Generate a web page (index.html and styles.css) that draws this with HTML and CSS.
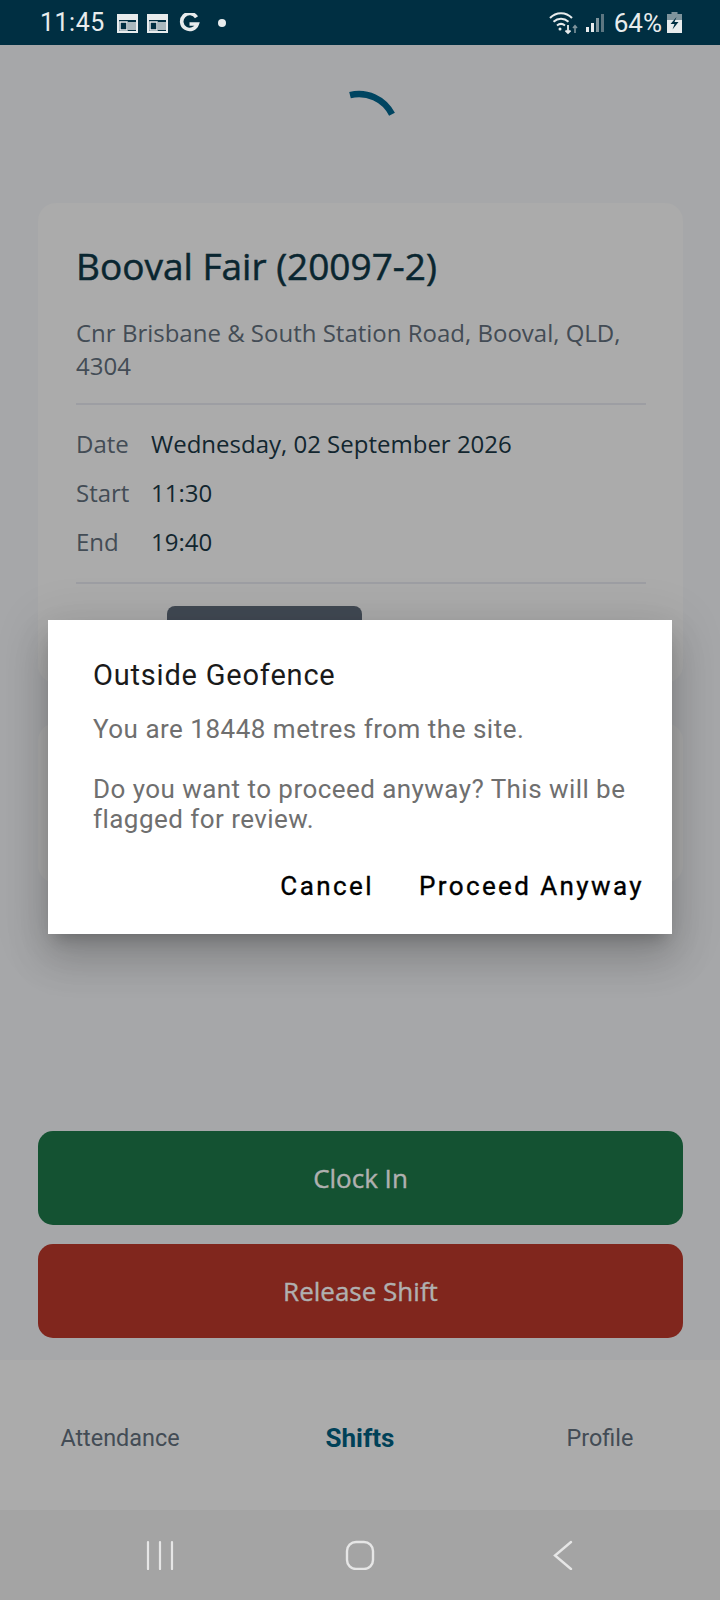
FILE: index.html
```html
<!DOCTYPE html>
<html lang="en">
<head>
  <meta charset="UTF-8">
  <title>Shift Details</title>
  <link rel="stylesheet" href="styles.css">
</head>
<body>
  <div class="phone">
    <div class="status-bar">
      <div class="status-left">
        <span class="clock">11:45</span>
        <svg class="cal-icon" width="21" height="20" viewBox="0 0 21 20"><path d="M1 3h19v16H1z" fill="none" stroke="#e8eced" stroke-width="2"/><path d="M0 1h21v6H0z" fill="#e8eced"/><path d="M3 9h7v8H3z" fill="none" stroke="#e8eced" stroke-width="1.500"/><path d="M11 9h8v8h-8z" fill="#a9b8bd"/></svg>
        <svg class="cal-icon" width="21" height="20" viewBox="0 0 21 20"><path d="M1 3h19v16H1z" fill="none" stroke="#e8eced" stroke-width="2"/><path d="M0 1h21v6H0z" fill="#e8eced"/><path d="M3 9h7v8H3z" fill="none" stroke="#e8eced" stroke-width="1.500"/><path d="M11 9h8v8h-8z" fill="#a9b8bd"/></svg>
        <svg class="g-icon" width="21" height="20" viewBox="0 0 21 20"><path d="M17.500 4.300A8 8 0 1 0 18.300 11H10.500" fill="none" stroke="#e8eced" stroke-width="3.600"/></svg>
        <span class="dot"></span>
      </div>
      <div class="status-right">
        <svg width="30" height="24" viewBox="0 0 30 24" fill="none" stroke="#e8eced" stroke-width="2"><path d="M1 7c6-6.500 16-6.500 22 0"/><path d="M4.500 10.800c4.500-4 10.500-4 15 0"/><path d="M8 14.500c2.500-2 5.500-2 8 0"/><circle cx="11" cy="18" r="1.500" fill="#e8eced" stroke="none"/><path d="M19 14v8M16.500 19.500l2.500 2.500 2.500-2.500" stroke-width="1.800"/><path d="M26 22v-7M24 17l2-2.300 2 2.300" stroke="#7f949c" stroke-width="1.600"/></svg>
        <svg class="signal" width="18" height="24" viewBox="0 0 18 24"><rect x="0" y="16" width="3" height="5" fill="#e8eced"/><rect x="5" y="12" width="3" height="9" fill="#e8eced"/><rect x="10" y="7" width="3" height="14" fill="#7f949c"/><rect x="15" y="3" width="3" height="18" fill="#5d7681"/></svg>
        <span class="battery-text">64%</span>
        <svg width="15" height="22" viewBox="0 0 15 22"><path d="M4.500 0h6v2h-6z" fill="#7f949c"/><path d="M0 2h15v6H0z" fill="#7f949c"/><path d="M0 8h15v13H0z" fill="#e8eced"/><path d="M9.500 5 3.500 12h4l-2 5.500L11.500 10h-4z" fill="#002f42"/></svg>
      </div>
    </div>

    <div class="content">
      <div class="spinner-row">
        <svg width="60" height="44" viewBox="0 0 60 44"><path d="M9 8.100A37 37 0 0 1 51 27.300" fill="none" stroke="#004561" stroke-width="6.500"/></svg>
      </div>

      <div class="card">
        <h2 class="site-name">Booval Fair (20097-2)</h2>
        <p class="address">Cnr Brisbane &amp; South Station Road, Booval, QLD, 4304</p>
        <div class="info-rows">
          <div class="info-row"><span class="info-label">Date</span><span class="info-value">Wednesday, 02 September 2026</span></div>
          <div class="info-row"><span class="info-label">Start</span><span class="info-value">11:30</span></div>
          <div class="info-row"><span class="info-label">End</span><span class="info-value">19:40</span></div>
        </div>
        <div class="status-row"><span class="status-pill"></span></div>
      </div>

      <div class="card card-second"></div>

      <div class="actions">
        <div class="action-btn clock-in">Clock In</div>
        <div class="action-btn release">Release Shift</div>
      </div>
    </div>

    <div class="tabs">
      <span class="tab">Attendance</span>
      <span class="tab active">Shifts</span>
      <span class="tab">Profile</span>
    </div>

    <div class="nav-bar">
      <svg width="30" height="30" viewBox="0 0 30 30" fill="none" stroke="#e6e6e6" stroke-width="2.200" stroke-linecap="round"><path d="M3 2v27M15 2v27M27 2v27"/></svg>
      <svg width="30" height="30" viewBox="0 0 30 30" fill="none" stroke="#e6e6e6" stroke-width="2.400"><rect x="2" y="2" width="26" height="27" rx="9"/></svg>
      <svg width="30" height="30" viewBox="0 0 30 30" fill="none" stroke="#e6e6e6" stroke-width="2.400" stroke-linecap="round"><path d="M26 2 10 15.500 26 29"/></svg>
    </div>
  </div>

  <div class="dialog">
    <h3 class="dialog-title">Outside Geofence</h3>
    <p class="dialog-text">You are 18448 metres from the site.</p>
    <p class="dialog-text">Do you want to proceed anyway? This will be flagged for review.</p>
    <div class="dialog-buttons">
      <span class="dialog-btn">Cancel</span>
      <span class="dialog-btn">Proceed Anyway</span>
    </div>
  </div>
</body>
</html>
```

FILE: styles.css
```css
body {
  margin: 0;
  background: #a6a7a9;
  font-family: "Open Sans", sans-serif;
}

.phone {
  width: 720px;
  height: 1600px;
  display: flex;
  flex-direction: column;
  overflow: hidden;
}

.status-bar {
  height: 45px;
  background: #002f42;
  color: #e8eced;
  font-family: Roboto, sans-serif;
  display: flex;
  justify-content: space-between;
  align-items: center;
  padding: 0 38px 0 40px;
  flex-shrink: 0;
}

.status-left,
.status-right {
  display: flex;
  align-items: center;
}

.clock {
  font-size: 25px;
  letter-spacing: 0.5px;
  margin-right: 12px;
}

.cal-icon {
  margin-right: 9px;
}

.g-icon {
  margin-left: 2px;
}

.dot {
  width: 8px;
  height: 8px;
  border-radius: 50%;
  background: #e8eced;
  margin-left: 18px;
}

.signal {
  margin-left: 7px;
}

.battery-text {
  font-size: 26px;
  margin: 0 5px 0 10px;
}

.content {
  flex: 1;
  display: flex;
  flex-direction: column;
  padding: 0 37px 0 38px;
}

.spinner-row {
  height: 158px;
  display: flex;
  justify-content: center;
  align-items: flex-start;
  padding: 42px 0 0 20px;
  box-sizing: border-box;
}

.card {
  background: #ababab;
  border-radius: 18px;
  padding: 40px 37px 0 38px;
  height: 480px;
  box-sizing: border-box;
}

.card-second {
  height: 160px;
  margin-top: 40px;
  padding: 0;
}

.site-name {
  margin: 0;
  font-size: 37px;
  line-height: 46px;
  font-weight: 400;
  color: #0a2630;
  -webkit-text-stroke: 0.5px #0a2630;
}

.address {
  margin: 27px 0 0;
  font-size: 24px;
  line-height: 33px;
  color: #434c55;
  padding-bottom: 21px;
  border-bottom: 2px solid #9d9ea3;
}

.info-rows {
  padding: 14px 0 16px;
  border-bottom: 2px solid #9d9ea3;
}

.info-row {
  display: flex;
  height: 49px;
  align-items: center;
  font-size: 24px;
}

.info-label {
  width: 75px;
  color: #434c55;
}

.info-value {
  color: #12262f;
}

.status-row {
  padding: 22px 0 0 91px;
}

.status-pill {
  display: block;
  width: 195px;
  height: 60px;
  border-radius: 8px;
  background: #414953;
}

.actions {
  margin-top: auto;
  display: flex;
  flex-direction: column;
  gap: 19px;
  padding-bottom: 22px;
}

.action-btn {
  height: 94px;
  border-radius: 15px;
  display: flex;
  justify-content: center;
  align-items: center;
  font-size: 26px;
  font-weight: 500;
  color: #b0b0b0;
  -webkit-text-stroke: 0.4px #b0b0b0;
}

.clock-in {
  background: #145232;
}

.release {
  background: #80261d;
}

.tabs {
  height: 150px;
  background: #ababab;
  display: grid;
  grid-template-columns: 240px 240px 240px;
  align-items: center;
  flex-shrink: 0;
  box-sizing: border-box;
  padding-top: 5px;
  font-family: Roboto, sans-serif;
  font-size: 23.4px;
  color: #434c55;
  text-align: center;
}

.tab.active {
  font-size: 26px;
  font-weight: 700;
  color: #004158;
}

.nav-bar {
  height: 90px;
  background: #a4a4a4;
  display: flex;
  align-items: center;
  gap: 170px;
  padding-left: 145px;
  flex-shrink: 0;
}

.dialog {
  position: absolute;
  left: 48px;
  top: 620px;
  width: 624px;
  height: 314px;
  box-sizing: border-box;
  background: #fff;
  padding: 36px 28px 0 45px;
  font-family: Roboto, sans-serif;
  box-shadow: 0 24px 38px 3px rgba(0, 0, 0, 0.14), 0 9px 46px 8px rgba(0, 0, 0, 0.1), 0 11px 15px -7px rgba(0, 0, 0, 0.2);
}

.dialog-title {
  margin: 0;
  font-size: 29px;
  line-height: 38px;
  font-weight: 400;
  letter-spacing: 0.8px;
  color: #1a1a1a;
}

.dialog-text {
  margin: 20px 0 30px;
  font-size: 26px;
  line-height: 30px;
  letter-spacing: 0.5px;
  color: #6f6f6f;
}

.dialog-text + .dialog-text {
  margin: 0;
  letter-spacing: 0.45px;
}

.dialog-buttons {
  display: flex;
  justify-content: flex-end;
  gap: 45px;
  margin-top: 37px;
}

.dialog-btn {
  font-size: 26px;
  font-weight: 400;
  letter-spacing: 2.4px;
  color: #000;
  -webkit-text-stroke: 0.35px #000;
}
```
